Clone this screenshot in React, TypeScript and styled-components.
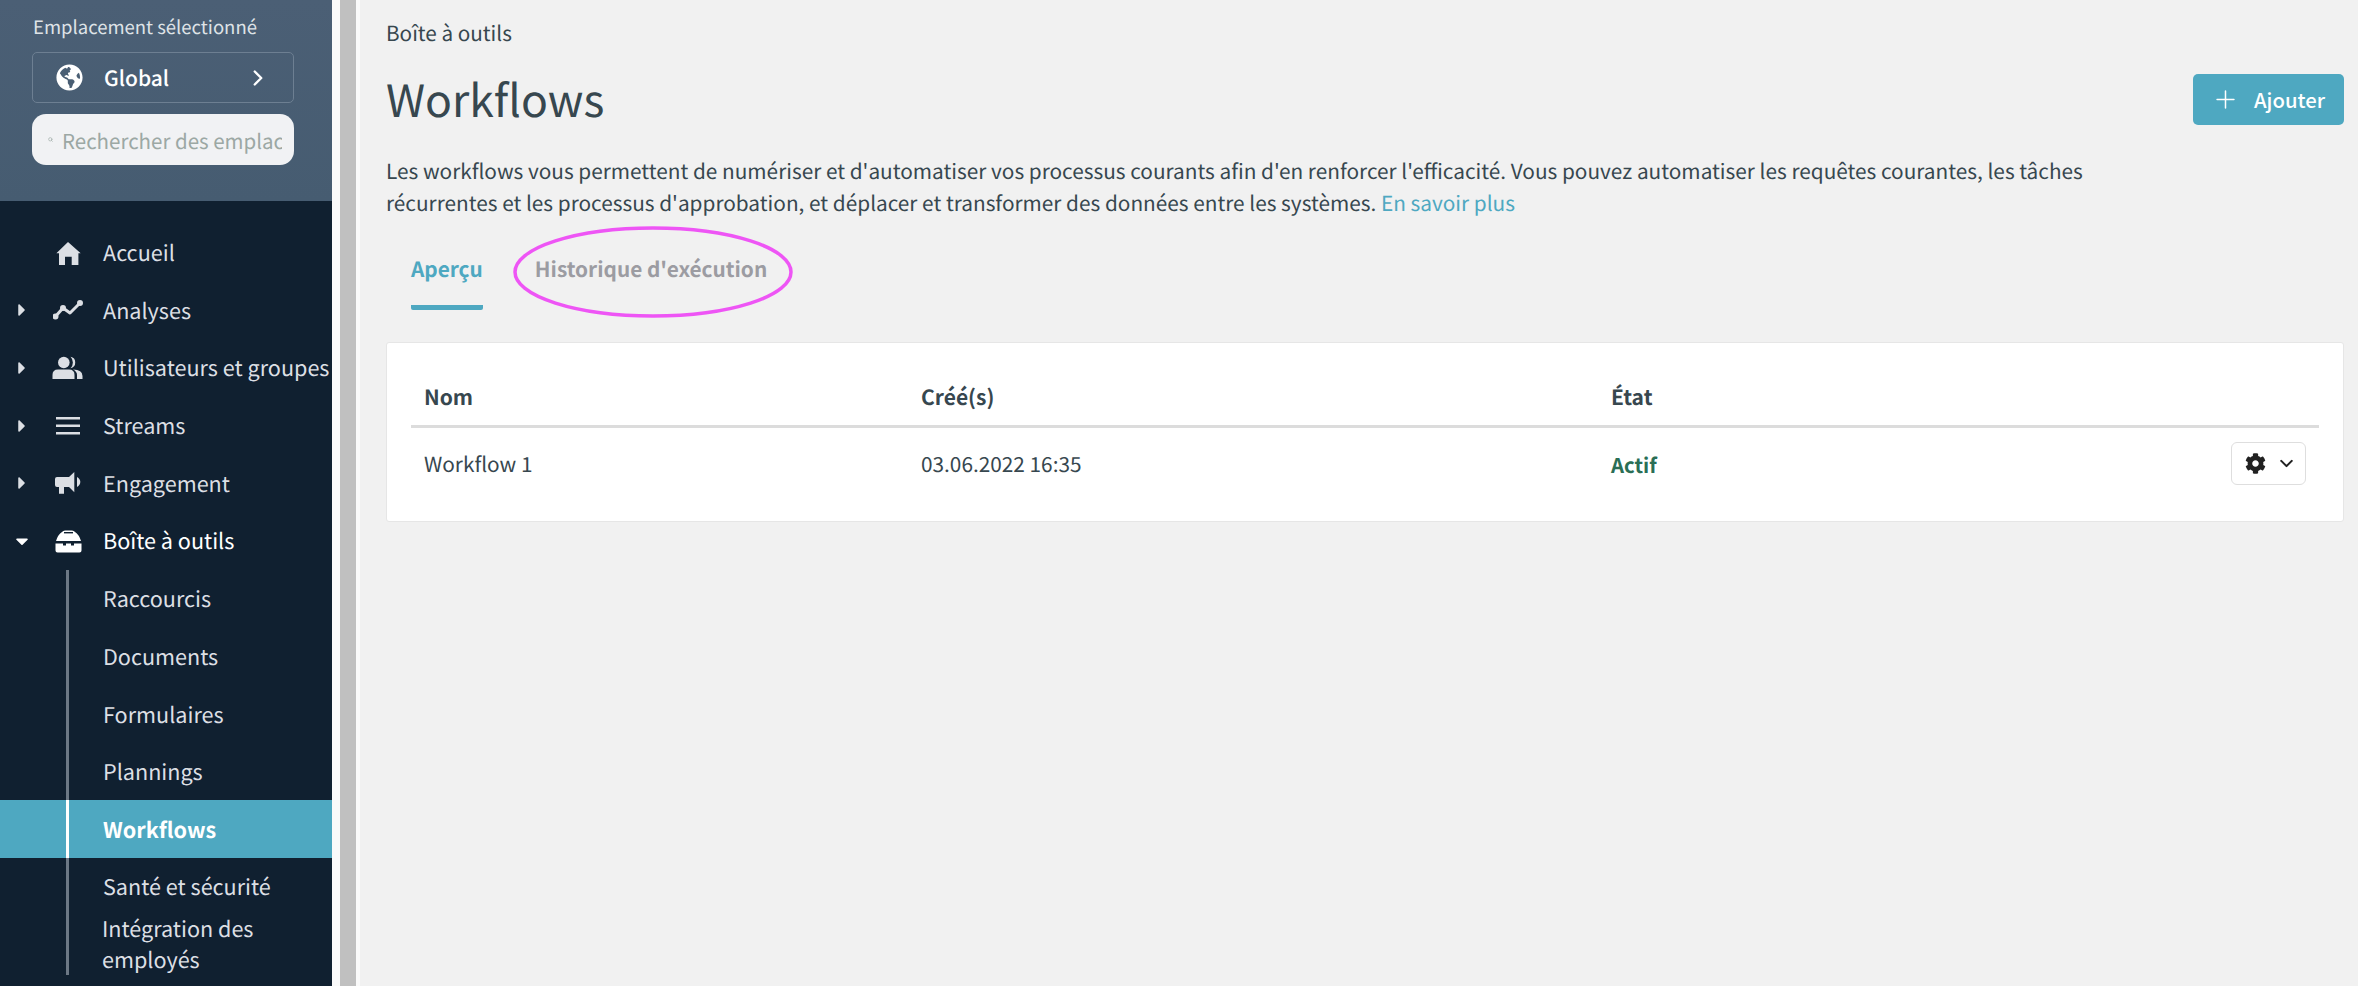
import * as React from "react";
import styled, { createGlobalStyle } from "styled-components";
import { FaCaretDown, FaCaretRight, FaCog, FaGlobeAmericas } from "react-icons/fa";
import { ChevronDown, ChevronRight, Plus, Search } from "lucide-react";

const GlobalStyle = createGlobalStyle`
  html, body {
    margin: 0;
    padding: 0;
    height: 100%;
    overflow: hidden;
    background: #f1f1f1;
  }
  * {
    box-sizing: border-box;
  }
  body {
    font-family: "Noto Sans CJK JP", "Noto Sans", sans-serif;
    font-size: 20.8px;
    color: #37474f;
    text-rendering: geometricPrecision;
  }
`;

const Page = styled.div`
  display: flex;
  width: 2358px;
  height: 986px;
  overflow: hidden;
`;

const Sidebar = styled.aside`
  flex: 0 0 332px;
  height: 100%;
  background: #102030;
  display: flex;
  flex-direction: column;
  overflow: hidden;
`;

const LocationPanel = styled.div`
  height: 201px;
  flex-shrink: 0;
  padding: 14px 38px 0 32px;
  background: linear-gradient(180deg, #4b5f75 0%, #465c71 100%);
`;

const LocationLabel = styled.div`
  font-size: 18.5px;
  line-height: 26px;
  color: #dfe3e7;
  padding-left: 1px;
`;

const LocationButton = styled.div`
  margin-top: 12px;
  height: 51px;
  display: flex;
  align-items: center;
  padding-left: 23px;
  border: 1px solid #6d7f92;
  border-radius: 5px;
  color: #fff;
  font-size: 21px;
  font-weight: 500;
`;

const LocationName = styled.span`
  margin-left: 21px;
  width: 141px;
`;

const LocationSearch = styled.div`
  margin-top: 11px;
  height: 51px;
  display: flex;
  align-items: center;
  padding: 0 12px 0 16px;
  gap: 9px;
  border-radius: 14px;
  background: #f1f2f4;
  color: #9ca8a4;
  font-size: 20.5px;
  white-space: nowrap;
  overflow: hidden;
`;

const SearchText = styled.span`
  overflow: hidden;
  flex: 1;
`;

const Nav = styled.nav`
  padding-top: 23px;
  display: flex;
  flex-direction: column;
`;

const NavRow = styled.div<{ $open?: boolean }>`
  height: 57.6px;
  display: flex;
  align-items: center;
  font-size: 21.6px;
  color: ${(p) => (p.$open ? "#fff" : "#dcdfe4")};
  white-space: nowrap;
`;

const Caret = styled.span`
  width: 46px;
  padding-left: 12px;
  display: flex;
  align-items: center;
  font-size: 20px;
  flex-shrink: 0;
`;

const NavIcon = styled.span`
  width: 44px;
  margin-right: 13px;
  display: flex;
  align-items: center;
  justify-content: center;
  flex-shrink: 0;
`;

const SubNav = styled.div`
  margin-left: 66px;
  display: flex;
  flex-direction: column;
  border-left: 3px solid #6c7885;
  margin-bottom: 12px;
`;

const SubRow = styled.div<{ $active?: boolean }>`
  height: 57.6px;
  display: flex;
  align-items: center;
  padding: 1px 0 0 34px;
  font-size: 21.6px;
  position: relative;
  color: ${(p) => (p.$active ? "#fff" : "#dcdfe4")};
  font-weight: ${(p) => (p.$active ? 700 : 400)};
  background: ${(p) => (p.$active ? "#4ea8c1" : "transparent")};

  ${(p) =>
    p.$active &&
    `
    &::before {
      content: "";
      position: absolute;
      left: -69px;
      width: 66px;
      top: 0;
      bottom: 0;
      background: #4ea8c1;
    }
    &::after {
      content: "";
      position: absolute;
      left: -3px;
      width: 3px;
      top: 0;
      bottom: 0;
      background: #fff;
    }
  `}
`;

const SubRowTall = styled.div`
  padding: 0 20px 0 33px;
  font-size: 21.6px;
  line-height: 31px;
  margin-top: -2px;
  color: #dcdfe4;
`;

const ScrollGutter = styled.div`
  flex: 0 0 28px;
  height: 100%;
  padding: 0 4px 0 8px;
  background: #fafafa;
`;

const ScrollThumb = styled.div`
  width: 16px;
  height: 100%;
  background: #c0c0c0;
`;

const Main = styled.main`
  flex: 1;
  min-width: 0;
  padding: 18px 14px 0 26px;
`;

const Breadcrumb = styled.div`
  font-size: 20.7px;
  line-height: 28px;
`;

const TitleRow = styled.div`
  margin-top: 20px;
  display: flex;
  align-items: center;
  justify-content: space-between;
  height: 64px;
`;

const Title = styled.h1`
  margin: 0;
  font-size: 44.5px;
  font-weight: 400;
  line-height: 64px;
  color: #37474f;
`;

const AddButton = styled.button`
  width: 151px;
  height: 51px;
  margin-top: 2px;
  border: 0;
  border-radius: 5px;
  background: #4ea8c1;
  color: #fff;
  font: inherit;
  font-size: 20.3px;
  font-weight: 500;
  display: flex;
  align-items: center;
  gap: 14px;
  padding: 0 0 0 18px;
`;

const Intro = styled.p`
  margin: 24px 0 0;
  width: 1760px;
  line-height: 32px;
`;

const LearnMore = styled.span`
  color: #4ea8c1;
`;

const Tabs = styled.div`
  margin-top: 15px;
  display: flex;
  height: 77px;
  padding-left: 25px;
  gap: 52px;
  position: relative;
`;

const Tab = styled.div<{ $active?: boolean }>`
  height: 77px;
  display: flex;
  align-items: center;
  padding-bottom: ${(p) => (p.$active ? "2px" : "8px")};
  font-size: 20.8px;
  font-weight: 700;
  color: ${(p) => (p.$active ? "#4ea8c1" : "#9c9ca2")};
  border-bottom: ${(p) => (p.$active ? "5px solid #4ea8c1" : "0")};
  border-radius: 0 0 2px 2px;
`;

const Highlight = styled.svg`
  position: absolute;
  left: 127px;
  top: -7px;
  width: 280px;
  height: 92px;
  overflow: visible;
`;

const Card = styled.section`
  margin-top: 32px;
  width: 1958px;
  height: 180px;
  background: #fff;
  border: 1px solid #e6e6e6;
  border-radius: 3px;
  padding: 25px 24px 0;
`;

const TableRow = styled.div`
  display: grid;
  grid-template-columns: 497px 690px 1fr auto;
  align-items: center;
  padding-left: 13px;
`;

const HeadRow = styled(TableRow)`
  height: 60px;
  border-bottom: 3px solid #dcdcdc;
  font-weight: 700;
  font-size: 21px;
  color: #37474f;
`;

const BodyRow = styled(TableRow)`
  height: 58px;
  padding-right: 13px;
  margin-top: 6px;
  font-size: 20.8px;
`;

const Status = styled.span`
  color: #2a6e55;
  font-weight: 700;
  font-size: 20.3px;
  padding-top: 1px;
`;

const GearButton = styled.div`
  width: 75px;
  height: 43px;
  display: flex;
  align-items: center;
  padding-left: 13px;
  gap: 10px;
  border: 1px solid #dedede;
  border-radius: 6px;
  color: #212121;
`;

const HomeIcon = () => (
  <svg width="26" height="24" viewBox="0 0 26 24" fill="currentColor">
    <path d="M13 1 L25.7 12.3 H23.4 V24 H16.7 V15.7 H10 V24 H4 V12.3 H1.4 Z" />
  </svg>
);

const TrendIcon = () => (
  <svg width="30" height="20" viewBox="0 0 30 20" fill="none" stroke="currentColor" strokeWidth="3" strokeLinecap="round" strokeLinejoin="round">
    <path d="M2 17 L10 8 L17 13 L27 3" />
    <circle cx="2.5" cy="16.5" r="1.5" fill="currentColor" />
    <circle cx="10" cy="8" r="1.5" fill="currentColor" />
    <circle cx="27" cy="3" r="1.5" fill="currentColor" />
  </svg>
);

const UsersIcon = () => (
  <svg width="32" height="24" viewBox="0 0 32 24" fill="currentColor">
    <circle cx="11.8" cy="6.5" r="5.8" />
    <path d="M0.5 23 V19 Q0.5 13.5 6 13.5 H17 Q22.5 13.5 22.5 19 V23 Z" />
    <path d="M18.5 0.8 A5.8 5.8 0 0 1 18.5 12.2 A8 8 0 0 0 18.5 0.8 Z" />
    <path d="M21 13.5 Q30.5 13.5 30.5 20 V23 H25 V19 Q25 15.5 21 13.5 Z" />
  </svg>
);

const StreamsIcon = () => (
  <svg width="26" height="18" viewBox="0 0 26 18" fill="currentColor">
    <rect x="1" y="0" width="24" height="2.5" />
    <rect x="1" y="7.5" width="24" height="2.5" />
    <rect x="1" y="15" width="24" height="2.5" />
  </svg>
);

const MegaphoneIcon = () => (
  <svg width="28" height="24" viewBox="0 0 28 24" fill="currentColor">
    <path d="M3 6 H15 L20.3 1 V21.3 L15 16 H10 V22.7 H5 V16 H3 Q1 16 1 14 V8 Q1 6 3 6 Z" />
    <path d="M23 6 Q26.3 8 26.3 11 Q26.3 14 23 16 Z" />
  </svg>
);

const ToolboxIcon = () => (
  <svg width="27" height="24" viewBox="0 0 27 24" fill="currentColor">
    <path d="M1 12 Q3 5.5 7 3 Q8 1.5 10 1.5 H17 Q19 1.5 20 3 Q24 5.5 26 12 Z" />
    <rect x="9" y="3" width="9" height="1.4" fill="#102030" />
    <path d="M0.5 14.5 H8 V16.5 H11 V14.5 H16 V16.5 H19 V14.5 H26.5 V21.5 Q26.5 23.5 24.5 23.5 H2.5 Q0.5 23.5 0.5 21.5 Z" />
  </svg>
);

const navItems: { label: string; icon: React.ReactNode; caret: boolean }[] = [
  { label: "Accueil", icon: <HomeIcon />, caret: false },
  { label: "Analyses", icon: <TrendIcon />, caret: true },
  { label: "Utilisateurs et groupes", icon: <UsersIcon />, caret: true },
  { label: "Streams", icon: <StreamsIcon />, caret: true },
  { label: "Engagement", icon: <MegaphoneIcon />, caret: true },
];

const subItems = ["Raccourcis", "Documents", "Formulaires", "Plannings", "Workflows", "Santé et sécurité"];

export default function App() {
  return (
    <Page>
      <GlobalStyle />
      <Sidebar>
        <LocationPanel>
          <LocationLabel>Emplacement sélectionné</LocationLabel>
          <LocationButton>
            <FaGlobeAmericas size={27} />
            <LocationName>Global</LocationName>
            <ChevronRight size={26} strokeWidth={2.2} />
          </LocationButton>
          <LocationSearch>
            <Search size={5} strokeWidth={3} />
            <SearchText>Rechercher des emplacements</SearchText>
          </LocationSearch>
        </LocationPanel>
        <Nav>
          {navItems.map((item) => (
            <NavRow key={item.label}>
              <Caret>{item.caret && <FaCaretRight />}</Caret>
              <NavIcon>{item.icon}</NavIcon>
              {item.label}
            </NavRow>
          ))}
          <NavRow $open>
            <Caret>
              <FaCaretDown />
            </Caret>
            <NavIcon>
              <ToolboxIcon />
            </NavIcon>
            Boîte à outils
          </NavRow>
          <SubNav>
            {subItems.map((label) => (
              <SubRow key={label} $active={label === "Workflows"}>
                {label}
              </SubRow>
            ))}
            <SubRowTall>Intégration des employés</SubRowTall>
          </SubNav>
        </Nav>
      </Sidebar>
      <ScrollGutter>
        <ScrollThumb />
      </ScrollGutter>
      <Main>
        <Breadcrumb>Boîte à outils</Breadcrumb>
        <TitleRow>
          <Title>Workflows</Title>
          <AddButton>
            <Plus size={29} strokeWidth={1.25} />
            Ajouter
          </AddButton>
        </TitleRow>
        <Intro>
          Les workflows vous permettent de numériser et d'automatiser vos processus courants afin d'en renforcer
          l'efficacité. Vous pouvez automatiser les requêtes courantes, les tâches récurrentes et les processus
          d'approbation, et déplacer et transformer des données entre les systèmes. <LearnMore>En savoir plus</LearnMore>
        </Intro>
        <Tabs>
          <Tab $active>Aperçu</Tab>
          <Tab>Historique d'exécution</Tab>
          <Highlight viewBox="0 0 280 92">
            <ellipse cx="140" cy="46" rx="138" ry="44" fill="none" stroke="#ee55f5" strokeWidth="3.5" />
          </Highlight>
        </Tabs>
        <Card>
          <HeadRow>
            <span>Nom</span>
            <span>Créé(s)</span>
            <span>État</span>
            <span />
          </HeadRow>
          <BodyRow>
            <span>Workflow 1</span>
            <span>03.06.2022 16:35</span>
            <Status>Actif</Status>
            <GearButton>
              <FaCog size={21} />
              <ChevronDown size={21} strokeWidth={2.4} />
            </GearButton>
          </BodyRow>
        </Card>
      </Main>
    </Page>
  );
}
